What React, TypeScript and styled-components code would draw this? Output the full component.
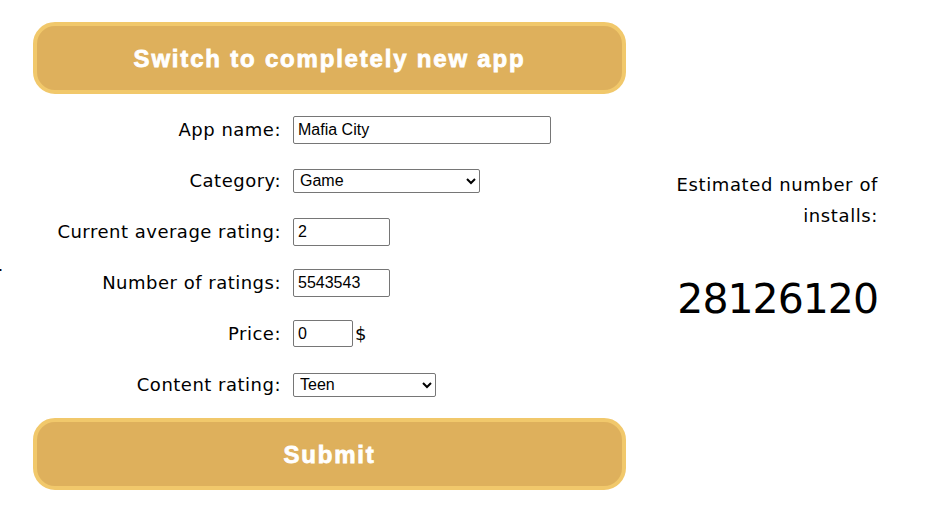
import React from "react";
import styled, { createGlobalStyle } from "styled-components";

const Global = createGlobalStyle`
  html, body { margin: 0; padding: 0; background: #fff; }
  body { font-family: "DejaVu Sans", sans-serif; color: #000; }
`;

const Page = styled.div`
  display: flex;
  align-items: flex-start;
  width: 943px;
  height: 508px;
  box-sizing: border-box;
`;

const Stray = styled.div`
  width: 4px;
  margin-top: 258px;
  margin-left: -2px;
  font-size: 16px;
  line-height: 16px;
`;

const FormColumn = styled.div`
  display: flex;
  flex-direction: column;
  width: 593px;
  margin-left: 31px;
  margin-top: 22px;
`;

const BigButton = styled.button`
  box-sizing: border-box;
  width: 593px;
  height: 72px;
  border: 4px solid #f1c86b;
  border-radius: 22px;
  background: #deb05c;
  color: #fff;
  font-family: "Liberation Sans", Arial, sans-serif;
  font-weight: 700;
  font-size: 24px;
  letter-spacing: 1.8px;
  -webkit-text-stroke: 0.8px #fff;
  cursor: pointer;
  padding: 2px 0 0;
`;

const Rows = styled.div`
  display: grid;
  grid-template-columns: 248px 1fr;
  grid-auto-rows: 51px;
  column-gap: 12px;
  margin: 10px 0 8px;
  align-items: center;
`;

const Label = styled.label`
  text-align: right;
  font-size: 18px;
  letter-spacing: 0.5px;
`;

const Field = styled.div`
  display: flex;
  align-items: center;
  gap: 2px;
`;

const Input = styled.input<{ $w: number; $h?: number }>`
  box-sizing: border-box;
  width: ${(p) => p.$w}px;
  height: ${(p) => p.$h ?? 28}px;
  border: 1px solid #767676;
  border-radius: 2px;
  padding: 0 4px;
  font-family: "Liberation Sans", Arial, sans-serif;
  font-size: 16px;
  color: #000;
  background: #fff;
`;

const Select = styled.select<{ $w: number }>`
  box-sizing: border-box;
  width: ${(p) => p.$w}px;
  height: 24px;
  border: 1px solid #767676;
  border-radius: 2px;
  padding: 0 2px;
  font-family: "Liberation Sans", Arial, sans-serif;
  font-size: 16px;
  color: #000;
  background: #fff;
`;

const Unit = styled.span`
  font-size: 18px;
`;

const Result = styled.div`
  display: flex;
  flex-direction: column;
  align-items: flex-end;
  width: 252px;
  margin-top: 169px;
`;

const ResultLabel = styled.div`
  text-align: right;
  font-size: 18px;
  line-height: 31px;
  letter-spacing: 0.6px;
`;

const ResultValue = styled.div`
  margin-top: 44px;
  font-size: 41px;
  line-height: 48px;
  letter-spacing: -1px;
`;

export default function App() {
  return (
    <>
      <Global />
      <Page>
        <Stray>.</Stray>
        <FormColumn>
          <BigButton>Switch to completely new app</BigButton>
          <Rows>
            <Label>App name:</Label>
            <Field>
              <Input $w={258} defaultValue="Mafia City" />
            </Field>
            <Label>Category:</Label>
            <Field>
              <Select $w={187} defaultValue="Game">
                <option>Game</option>
                <option>Social</option>
              </Select>
            </Field>
            <Label>Current average rating:</Label>
            <Field>
              <Input $w={97} defaultValue="2" />
            </Field>
            <Label>Number of ratings:</Label>
            <Field>
              <Input $w={97} defaultValue="5543543" />
            </Field>
            <Label>Price:</Label>
            <Field>
              <Input $w={60} $h={27} defaultValue="0" />
              <Unit>$</Unit>
            </Field>
            <Label>Content rating:</Label>
            <Field>
              <Select $w={143} defaultValue="Teen">
                <option>Everyone</option>
                <option>Teen</option>
              </Select>
            </Field>
          </Rows>
          <BigButton>Submit</BigButton>
        </FormColumn>
        <Result>
          <ResultLabel>
            Estimated number of
            <br />
            installs:
          </ResultLabel>
          <ResultValue>28126120</ResultValue>
        </Result>
      </Page>
    </>
  );
}
